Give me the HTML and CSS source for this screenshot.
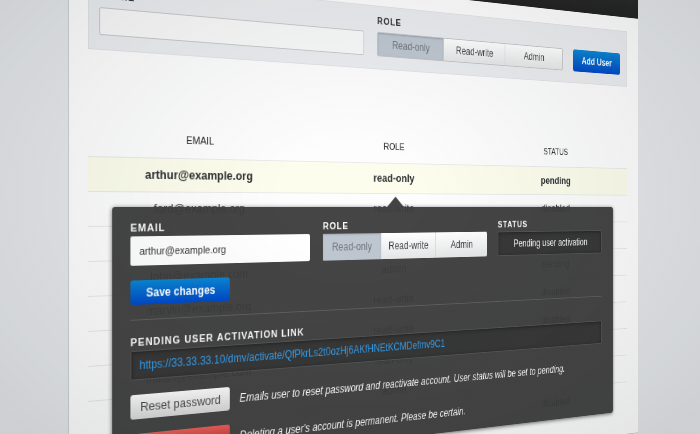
FILE: index.html
```html
<!DOCTYPE html>
<html lang="en">
<head>
<meta charset="utf-8">
<title>Users</title>
<link rel="stylesheet" href="styles.css">
</head>
<body>
<div class="scene">
  <main class="page">
    <header class="topbar"></header>
    <div class="content">
      <form class="add-form">
        <div class="field grow">
          <label class="label" for="new-email">EMAIL</label>
          <input class="text-input" id="new-email" type="email">
        </div>
        <fieldset class="field">
          <legend class="label">ROLE</legend>
          <div class="segments wide">
            <label class="segment"><input type="radio" name="new-role" checked>Read-only</label>
            <label class="segment"><input type="radio" name="new-role">Read-write</label>
            <label class="segment"><input type="radio" name="new-role">Admin</label>
          </div>
        </fieldset>
        <button class="button primary add" type="button">Add User</button>
      </form>

      <section class="users">
        <table class="user-table">
          <thead>
            <tr><th>EMAIL</th><th>ROLE</th><th>STATUS</th></tr>
          </thead>
          <tbody>
            <tr class="selected"><td>arthur@example.org</td><td>read-only</td><td>pending</td></tr>
            <tr><td>ford@example.org</td><td>read-write</td><td>disabled</td></tr>
            <tr><td></td><td></td><td></td></tr>
            <tr><td>john@example.com</td><td>admin</td><td>pending</td></tr>
            <tr><td>marvin@example.org</td><td>read-write</td><td>disabled</td></tr>
            <tr><td></td><td>read-write</td><td>disabled</td></tr>
            <tr><td>trillian@example.com</td><td>read-only</td><td></td></tr>
            <tr><td></td><td>admin</td><td></td></tr>
            <tr><td></td><td></td><td>disabled</td></tr>
          </tbody>
        </table>

        <form class="popover">
          <div class="row">
            <div class="field grow">
              <label class="label" for="email">EMAIL</label>
              <input class="text-input" id="email" type="email" value="arthur@example.org">
            </div>
            <fieldset class="field">
              <legend class="label">ROLE</legend>
              <div class="segments">
                <label class="segment"><input type="radio" name="role" checked>Read-only</label>
                <label class="segment"><input type="radio" name="role">Read-write</label>
                <label class="segment"><input type="radio" name="role">Admin</label>
              </div>
            </fieldset>
            <div class="field status">
              <span class="label">STATUS</span>
              <span class="well centered">Pending user activation</span>
            </div>
          </div>
          <button class="button primary" type="button">Save changes</button>
          <hr class="divider">
          <div class="field">
            <span class="label">PENDING USER ACTIVATION LINK</span>
            <span class="well"><a class="link" href="#">https://33.33.33.10/dmv/activate/QfPkrLs2t0ozHj6AKfHNEtKCMDefmv9C1</a></span>
          </div>
          <div class="action">
            <button class="button" type="button">Reset password</button>
            <em class="hint">Emails user to reset password and reactivate account. User status will be set to pending.</em>
          </div>
          <div class="action">
            <button class="button danger" type="button">Delete user</button>
            <em class="hint">Deleting a user's account is permanent. Please be certain.</em>
          </div>
        </form>
      </section>
    </div>
  </main>
</div>
</body>
</html>
```
FILE: styles.css
```css
* { box-sizing: border-box; }

body {
  margin: 0;
  height: 100vh;
  overflow: hidden;
  background: #e5e7ea;
  color: #2c2f31;
  font: 12px/14px "Liberation Sans", Arial, sans-serif;
}

/* Soft vignette over the whole scene */
body::after {
  content: "";
  position: fixed;
  inset: 0;
  pointer-events: none;
  background: radial-gradient(ellipse 66% 76% at 50% 45%, transparent 15%, rgba(20, 24, 28, 0.06) 65%, rgba(20, 24, 28, 0.11) 100%);
}

/* The page is seen at an angle, its right side turned away */
.scene {
  height: 100%;
  overflow: hidden;
  perspective: 820px;
  perspective-origin: 88px 207px;
}

.page {
  width: calc(100% + 96px);
  margin: -102px 0 0 67px;
  padding-bottom: 34px;
  background: #fdfdfd;
  border: 1px solid #cdd0d5;
  transform: rotateY(20deg);
  transform-origin: 21px 50%;
}

.topbar {
  height: 60px;
  margin: -1px -1px 0;
  background: linear-gradient(#333, #222);
}

.content { padding: 18px 20px 0; }

.add-form {
  display: flex;
  align-items: flex-end;
  gap: 18px;
  padding: 9px 12px 14px 11px;
  background: #ebedf0;
  border: 1px solid #e2e4e7;
}

.field {
  display: flex;
  flex-direction: column;
  margin: 0;
  padding: 0;
  border: 0;
  min-width: 0;
}

.grow { flex: 1; }

.label {
  display: block;
  padding: 0;
  margin-bottom: 6px;
  font-size: 11px;
  font-weight: bold;
  letter-spacing: 1px;
}

.text-input {
  width: 100%;
  height: 28px;
  padding: 0 10px;
  border: 1px solid #c6c8c9;
  border-radius: 2px;
  background: #f9f9f9;
  color: #333;
  font: inherit;
  font-size: 11px;
}

.segments {
  display: grid;
  grid-template-columns: repeat(3, 79px);
  height: 30px;
  border-radius: 2px;
  overflow: hidden;
  background: linear-gradient(#fff, #e6e7e8);
}

.segments.wide {
  grid-template-columns: repeat(3, 95px);
  height: 28px;
  border: 1px solid #c3c5c7;
}

.segment {
  display: flex;
  align-items: center;
  justify-content: center;
  color: #3c3e40;
}

.segment + .segment { border-left: 1px solid #d4d6d8; }

.segment input {
  position: absolute;
  opacity: 0;
  pointer-events: none;
}

.segment:has(:checked) {
  background: #bec6d0;
  color: #70757b;
  box-shadow: inset 0 1px 2px #98a1ab;
}

.button {
  width: 115px;
  height: 25px;
  padding: 0;
  border: 0;
  border-radius: 3px;
  background: linear-gradient(#fdfdfd, #d9d9d9);
  color: #4a4a4a;
  font: inherit;
  font-size: 13px;
}

.button.primary {
  background: linear-gradient(#0a86d2, #0048c8);
  color: #fff;
  font-size: 12px;
  font-weight: bold;
}

.button.add {
  width: 83px;
  height: 28px;
}

.button.danger {
  background: linear-gradient(#e9605a, #b8231f);
  color: #fff;
}

.users {
  position: relative;
  margin-top: 69px;
}

.user-table {
  width: 100%;
  table-layout: fixed;
  border-collapse: collapse;
  text-align: center;
}

.user-table th {
  height: 38px;
  padding: 0;
  color: #222;
  font-size: 11px;
  font-weight: normal;
}

.user-table td {
  height: 35px;
  padding: 1px 0 0;
  border-top: 1px solid #e9e9ea;
  font-size: 13px;
  color: #444;
}

.user-table .selected td {
  background: #fcfdec;
  color: #2c2f31;
  font-weight: bold;
}

.popover {
  position: absolute;
  top: 89px;
  left: 26px;
  right: 26px;
  padding: 14px 20px 11px;
  border-radius: 3px;
  background: rgba(59, 59, 59, 0.95);
  box-shadow: 0 1px 5px rgba(0, 0, 0, 0.6);
  color: #fff;
}

.popover::before {
  content: "";
  position: absolute;
  bottom: 100%;
  left: 50%;
  margin-left: -10px;
  border: 12px solid transparent;
  border-top: 0;
  border-bottom: 12px solid #434343;
}

.popover .label { margin-bottom: 2px; }

.popover .text-input {
  height: 30px;
  border: 0;
  background: #fff;
}

.row {
  display: flex;
  gap: 17px;
  margin-bottom: 15px;
}

.status { width: 175px; }

.well {
  display: block;
  height: 30px;
  padding: 0 9px;
  border: 1px solid #555;
  border-radius: 2px;
  background: #383838;
  box-shadow: inset 0 1px 4px #222;
  line-height: 28px;
}

.well.centered { text-align: center; }

.link {
  color: #35a0ef;
  text-decoration: none;
}

.divider {
  height: 1px;
  margin: 15px 0;
  border: 0;
  background: #606060;
}

.action {
  display: flex;
  align-items: center;
  gap: 12px;
  margin-top: 15px;
  white-space: nowrap;
}
```
